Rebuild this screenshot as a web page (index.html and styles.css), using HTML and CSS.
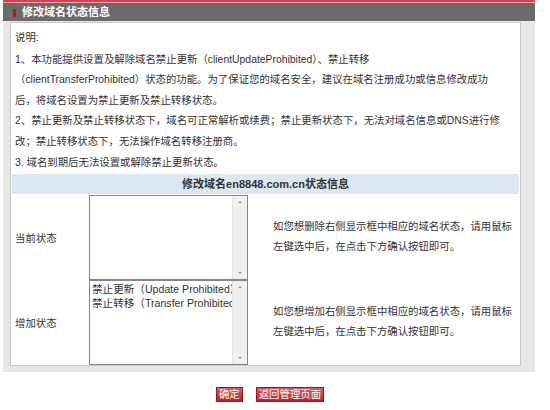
FILE: index.html
```html
<!DOCTYPE html>
<html lang="zh-CN">
<head>
<meta charset="utf-8">
<title>修改域名状态信息</title>
<link rel="stylesheet" href="styles.css">
</head>
<body>
<div class="page">
  <div class="titlebar"><span class="mark"></span><span class="title">修改域名状态信息</span></div>
  <div class="frame">
    <div class="panel">
      <div class="notes">
        <p class="first">说明:</p>
        <p>1、本功能提供设置及解除域名禁止更新（clientUpdateProhibited）、禁止转移<br>（clientTransferProhibited）状态的功能。为了保证您的域名安全，建议在域名注册成功或信息修改成功<br>后，将域名设置为禁止更新及禁止转移状态。</p>
        <p>2、禁止更新及禁止转移状态下，域名可正常解析或续费；禁止更新状态下，无法对域名信息或DNS进行修<br>改；禁止转移状态下，无法操作域名转移注册商。</p>
        <p>3. 域名到期后无法设置或解除禁止更新状态。</p>
      </div>
      <div class="section-head">修改域名<span class="latin">en8848.com.cn</span>状态信息</div>
      <div class="status-row">
        <div class="label">当前状态</div>
        <div class="listbox">
          <div class="items"></div>
          <div class="scrollbar"><span class="arrow up"></span><span class="arrow down"></span></div>
        </div>
        <div class="hint">如您想删除右侧显示框中相应的域名状态，请用鼠标<br>左键选中后，在点击下方确认按钮即可。</div>
      </div>
      <div class="status-row">
        <div class="label">增加状态</div>
        <div class="listbox">
          <div class="items">
            <div class="item">禁止更新（Update Prohibited）</div>
            <div class="item">禁止转移（Transfer Prohibited）</div>
          </div>
          <div class="scrollbar"><span class="arrow up"></span><span class="arrow down"></span></div>
        </div>
        <div class="hint">如您想增加右侧显示框中相应的域名状态，请用鼠标<br>左键选中后，在点击下方确认按钮即可。</div>
      </div>
    </div>
  </div>
  <div class="actions">
    <button class="btn" type="button">确定</button>
    <button class="btn" type="button">返回管理页面</button>
  </div>
</div>
</body>
</html>
```
FILE: styles.css
```css
html, body {
  margin: 0;
  padding: 0;
  background: #ffffff;
}
body {
  font-family: "Liberation Sans", "Noto Sans CJK SC", sans-serif;
  font-size: 10.4px;
  color: #333333;
}
.page {
  margin-left: 3px;
  width: 532px;
}
.titlebar {
  height: 19px;
  border-top: 2px solid #cf4450;
  background: linear-gradient(#eaa5aa 0, #eaa5aa 1px, #6b6b6b 1px);
  display: flex;
  align-items: center;
}
.mark {
  width: 3px;
  height: 8px;
  margin: 2px 0 0 10px;
  background: #b01a1f;
}
.title {
  margin: 1px 0 0 6px;
  color: #ffffff;
  font-weight: bold;
  font-size: 11px;
  line-height: 14px;
}
.frame {
  background: #e7e7e7;
  padding: 1px 14px 6px 7px;
}
.panel {
  background: #ffffff;
  border: 1px solid #c9c9c9;
}
.notes {
  padding: 5px 0 0 4px;
  line-height: 20.6px;
  white-space: nowrap;
}
.notes p {
  margin: 0;
}
.notes .first {
  margin-bottom: 1px;
}
.section-head {
  margin: 1px 1px 0 1px;
  height: 20px;
  background: #dce7f1;
  text-align: center;
  font-weight: bold;
  font-size: 11px;
  line-height: 20px;
  color: #333333;
}
.status-row {
  display: grid;
  grid-template-columns: 78px 159px 1fr;
  align-items: center;
}
.section-head + .status-row {
  padding-top: 1px;
}
.label {
  padding-left: 4px;
}
.listbox {
  height: 83px;
  border: 1px solid #868686;
  display: flex;
  background: #ffffff;
}
.items {
  flex: 1;
  min-width: 0;
  overflow: hidden;
  padding: 1px 0 0 2px;
  line-height: 14px;
  font-size: 10.6px;
  white-space: nowrap;
  color: #333333;
}
.scrollbar {
  width: 14px;
  background: #f0f0f0;
  border-left: 1px solid #e4e4e4;
  display: flex;
  flex-direction: column;
  justify-content: space-between;
  align-items: center;
  padding: 5px 0;
}
.arrow {
  width: 0;
  height: 0;
  border-left: 2px solid transparent;
  border-right: 2px solid transparent;
}
.arrow.up {
  border-bottom: 2px solid #9a9a9a;
}
.arrow.down {
  border-top: 2px solid #9a9a9a;
}
.hint {
  margin-left: 25px;
  line-height: 20px;
  white-space: nowrap;
  margin-top: -2px;
}
.actions {
  display: flex;
  justify-content: center;
  gap: 13px;
  margin-top: 15px;
  padding-left: 2px;
}
.btn {
  margin: 0;
  padding: 0 2px;
  height: 15px;
  border: 1px solid #8e1b21;
  background: linear-gradient(#dc5e64, #b8242b);
  color: #ffffff;
  font-family: "Liberation Sans", "Noto Sans CJK SC", sans-serif;
  font-size: 10.4px;
  line-height: 13px;
}
```
